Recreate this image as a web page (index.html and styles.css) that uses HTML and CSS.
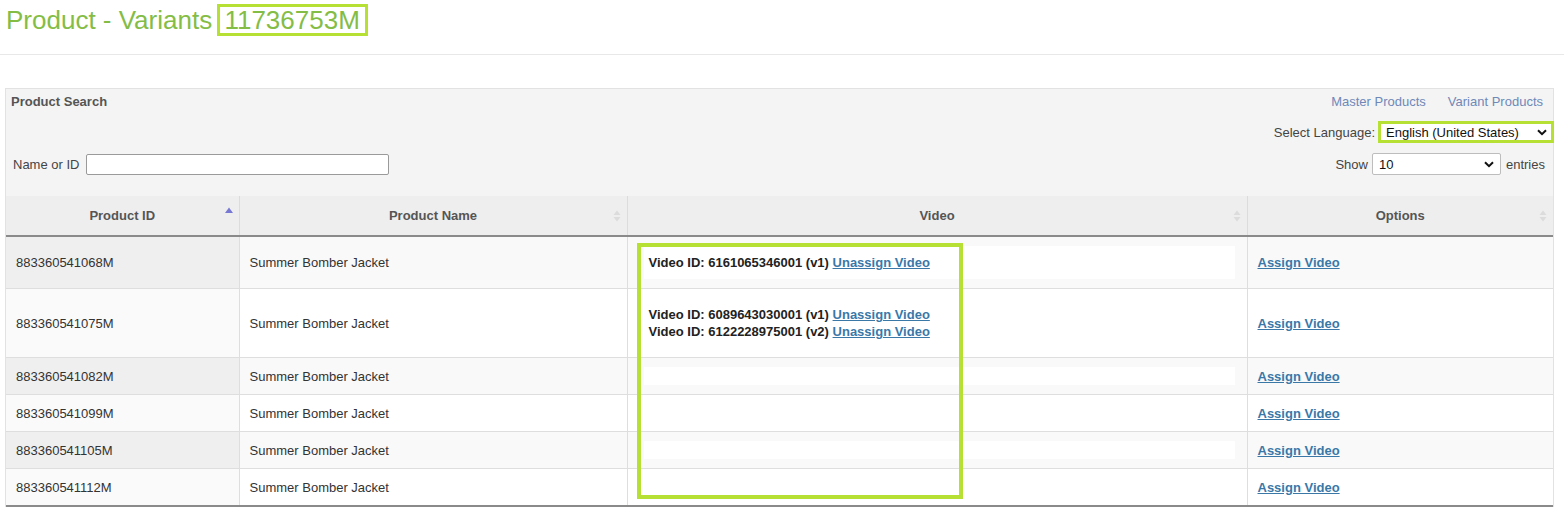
FILE: index.html
```html
<!DOCTYPE html>
<html lang="en">
<head>
<meta charset="utf-8">
<title>Product - Variants</title>
<link rel="stylesheet" href="styles.css">
</head>
<body>
<h1 class="page-title">Product - Variants <span class="hl-id">11736753M</span></h1>
<hr class="rule">
<div class="panel">
  <div class="toolbar">
    <div class="bar-row">
      <span class="panel-title">Product Search</span>
      <span class="nav-links"><a href="#">Master Products</a><a href="#">Variant Products</a></span>
    </div>
    <div class="bar-row right lang-row">
      <span class="lbl">Select Language:</span>
      <div class="fake-select lang-select"><span>English (United States)</span><svg width="10" height="7" viewBox="0 0 10 7"><path d="M1 1.2 L5 5.2 L9 1.2" fill="none" stroke="#111" stroke-width="2"/></svg></div>
    </div>
    <div class="bar-row show-row">
      <label class="lbl">Name or ID <input class="search-input" type="text"></label>
      <span class="show-wrap"><span class="lbl">Show</span><div class="fake-select show-select"><span>10</span><svg width="10" height="7" viewBox="0 0 10 7"><path d="M1 1.2 L5 5.2 L9 1.2" fill="none" stroke="#111" stroke-width="2"/></svg></div><span class="lbl">entries</span></span>
    </div>
  </div>
  <div class="table-wrap">
    <table class="grid">
      <colgroup><col class="c1"><col class="c2"><col class="c3"><col class="c4"></colgroup>
      <thead>
        <tr>
          <th><span>Product ID</span><svg class="sort" width="8" height="14" viewBox="0 0 8 14"><path d="M0 7 L4 1.5 L8 7 Z" fill="#7777d4"/></svg></th>
          <th><span>Product Name</span><svg class="sort" width="8" height="14" viewBox="0 0 8 14"><path d="M0.5 6 L4 1.5 L7.5 6 Z M0.5 8 L4 12.5 L7.5 8 Z" fill="#dcdcdc"/></svg></th>
          <th><span>Video</span><svg class="sort" width="8" height="14" viewBox="0 0 8 14"><path d="M0.5 6 L4 1.5 L7.5 6 Z M0.5 8 L4 12.5 L7.5 8 Z" fill="#dcdcdc"/></svg></th>
          <th><span>Options</span><svg class="sort" width="8" height="14" viewBox="0 0 8 14"><path d="M0.5 6 L4 1.5 L7.5 6 Z M0.5 8 L4 12.5 L7.5 8 Z" fill="#dcdcdc"/></svg></th>
        </tr>
      </thead>
      <tbody>
        <tr class="odd">
          <td>883360541068M</td><td>Summer Bomber Jacket</td>
          <td class="vid"><div class="vbox"><b>Video ID: 6161065346001 (v1)</b> <a href="#">Unassign Video</a></div></td>
          <td><a href="#">Assign Video</a></td>
        </tr>
        <tr class="even">
          <td>883360541075M</td><td>Summer Bomber Jacket</td>
          <td class="vid"><div class="vbox"><b>Video ID: 6089643030001 (v1)</b> <a href="#">Unassign Video</a><br><b>Video ID: 6122228975001 (v2)</b> <a href="#">Unassign Video</a></div></td>
          <td><a href="#">Assign Video</a></td>
        </tr>
        <tr class="odd">
          <td>883360541082M</td><td>Summer Bomber Jacket</td>
          <td class="vid"><div class="vbox empty"></div></td>
          <td><a href="#">Assign Video</a></td>
        </tr>
        <tr class="even">
          <td>883360541099M</td><td>Summer Bomber Jacket</td>
          <td class="vid"><div class="vbox empty"></div></td>
          <td><a href="#">Assign Video</a></td>
        </tr>
        <tr class="odd">
          <td>883360541105M</td><td>Summer Bomber Jacket</td>
          <td class="vid"><div class="vbox empty"></div></td>
          <td><a href="#">Assign Video</a></td>
        </tr>
        <tr class="even">
          <td>883360541112M</td><td>Summer Bomber Jacket</td>
          <td class="vid"><div class="vbox empty"></div></td>
          <td><a href="#">Assign Video</a></td>
        </tr>
      </tbody>
    </table>
    <div class="hl-video"></div>
  </div>
</div>
</body>
</html>
```
FILE: styles.css
```css
html, body {
  margin: 0;
  padding: 0;
  background: #ffffff;
  font-family: "Liberation Sans", Arial, sans-serif;
  color: #333;
}

.page-title {
  margin: 4px 0 0 0;
  padding-left: 6px;
  font-size: 26px;
  font-weight: normal;
  color: #84bd45;
  line-height: 32px;
  height: 32px;
}

.hl-id {
  display: inline-block;
  border: 3px solid #b6e033;
  padding: 0 5px 0 4px;
  line-height: 26px;
  vertical-align: top;
  margin-left: -2px;
}

.rule {
  margin: 18px 0 0 0;
  border: 0;
  border-top: 1px solid #e8e8e8;
  height: 0;
}

.panel {
  margin: 33px 10px 0 5px;
  border: 1px solid #e2e2e2;
  border-bottom: 0;
  background: #f4f4f4;
}

.toolbar {
  padding: 0 8px 21px 5px;
  font-size: 13px;
}

.bar-row {
  display: flex;
  align-items: center;
  justify-content: space-between;
}

.bar-row:first-child {
  height: 24px;
  padding-right: 2px;
}

.bar-row.right {
  justify-content: flex-end;
}

.lang-row {
  margin-top: 8px;
  height: 22px;
  margin-right: -9px;
}

.show-row {
  margin-top: 10px;
  height: 22px;
}

.panel-title {
  font-weight: bold;
  color: #555;
}

.nav-links a {
  color: #6f88b8;
  text-decoration: none;
  margin-left: 22px;
}

.lbl {
  color: #444;
}

.fake-select {
  display: flex;
  align-items: center;
  justify-content: space-between;
  background: #fff;
  box-sizing: border-box;
  color: #111;
}

.lang-select {
  margin-left: 3px;
  width: 176px;
  height: 22px;
  border: 3px solid #b6e033;
  font-size: 13px;
  padding: 0 4px 0 5px;
}

.show-select {
  margin: 0 5px 0 4px;
  width: 129px;
  height: 22px;
  border: 1px solid #bdbdbd;
  border-radius: 2px;
  font-size: 13px;
  padding: 0 6px 0 6px;
}

.show-wrap {
  display: flex;
  align-items: center;
}

.search-input {
  margin-left: 7px;
  width: 303px;
  height: 21px;
  box-sizing: border-box;
  border: 1px solid #9a9a9a;
  border-radius: 2px;
  vertical-align: middle;
  padding: 0 4px;
}

.show-row label {
  padding-left: 2px;
  display: flex;
  align-items: center;
}

.table-wrap {
  position: relative;
}

.grid {
  width: 100%;
  border-collapse: collapse;
  table-layout: fixed;
  font-size: 13px;
}

.c1 { width: 233px; }
.c2 { width: 388px; }
.c3 { width: 620px; }
.c4 { width: auto; }

.grid th {
  position: relative;
  height: 39px;
  padding: 0;
  background: #eeeeee;
  color: #555;
  font-size: 13px;
  font-weight: bold;
  text-align: center;
  border-right: 1px solid #dcdcdc;
  border-bottom: 2px solid #8a8a8a;
}

.grid th:last-child {
  border-right: 0;
}

.grid th .sort {
  position: absolute;
  right: 6px;
  top: 13px;
}

.grid th:first-child .sort {
  right: 6px;
  top: 10px;
}

.grid td {
  padding: 9px 10px;
  border-right: 1px solid #dedede;
  border-bottom: 1px solid #dedede;
  color: #333;
  line-height: 17px;
  vertical-align: middle;
}

.grid td:last-child {
  border-right: 0;
}

.grid tbody tr:last-child td {
  border-bottom: 2px solid #8a8a8a;
}

.odd td { background: #f9f9f9; }
.odd td:first-child { background: #efefef; }
.even td { background: #ffffff; }
.even td:first-child { background: #fafafa; }

.grid td.vid {
  padding: 9px 12px 9px 16px;
}

.vbox {
  background: #ffffff;
  padding: 8px 5px;
  color: #222;
}

.vbox.empty {
  padding: 0;
  height: 18px;
}

.vbox b {
  font-weight: bold;
  color: #222;
}

.grid a {
  color: #3a78a8;
  font-weight: bold;
  text-decoration: underline;
}

.hl-video {
  position: absolute;
  left: 631px;
  top: 47px;
  width: 318px;
  height: 248px;
  border: 4px solid #b6e033;
  pointer-events: none;
}
```
